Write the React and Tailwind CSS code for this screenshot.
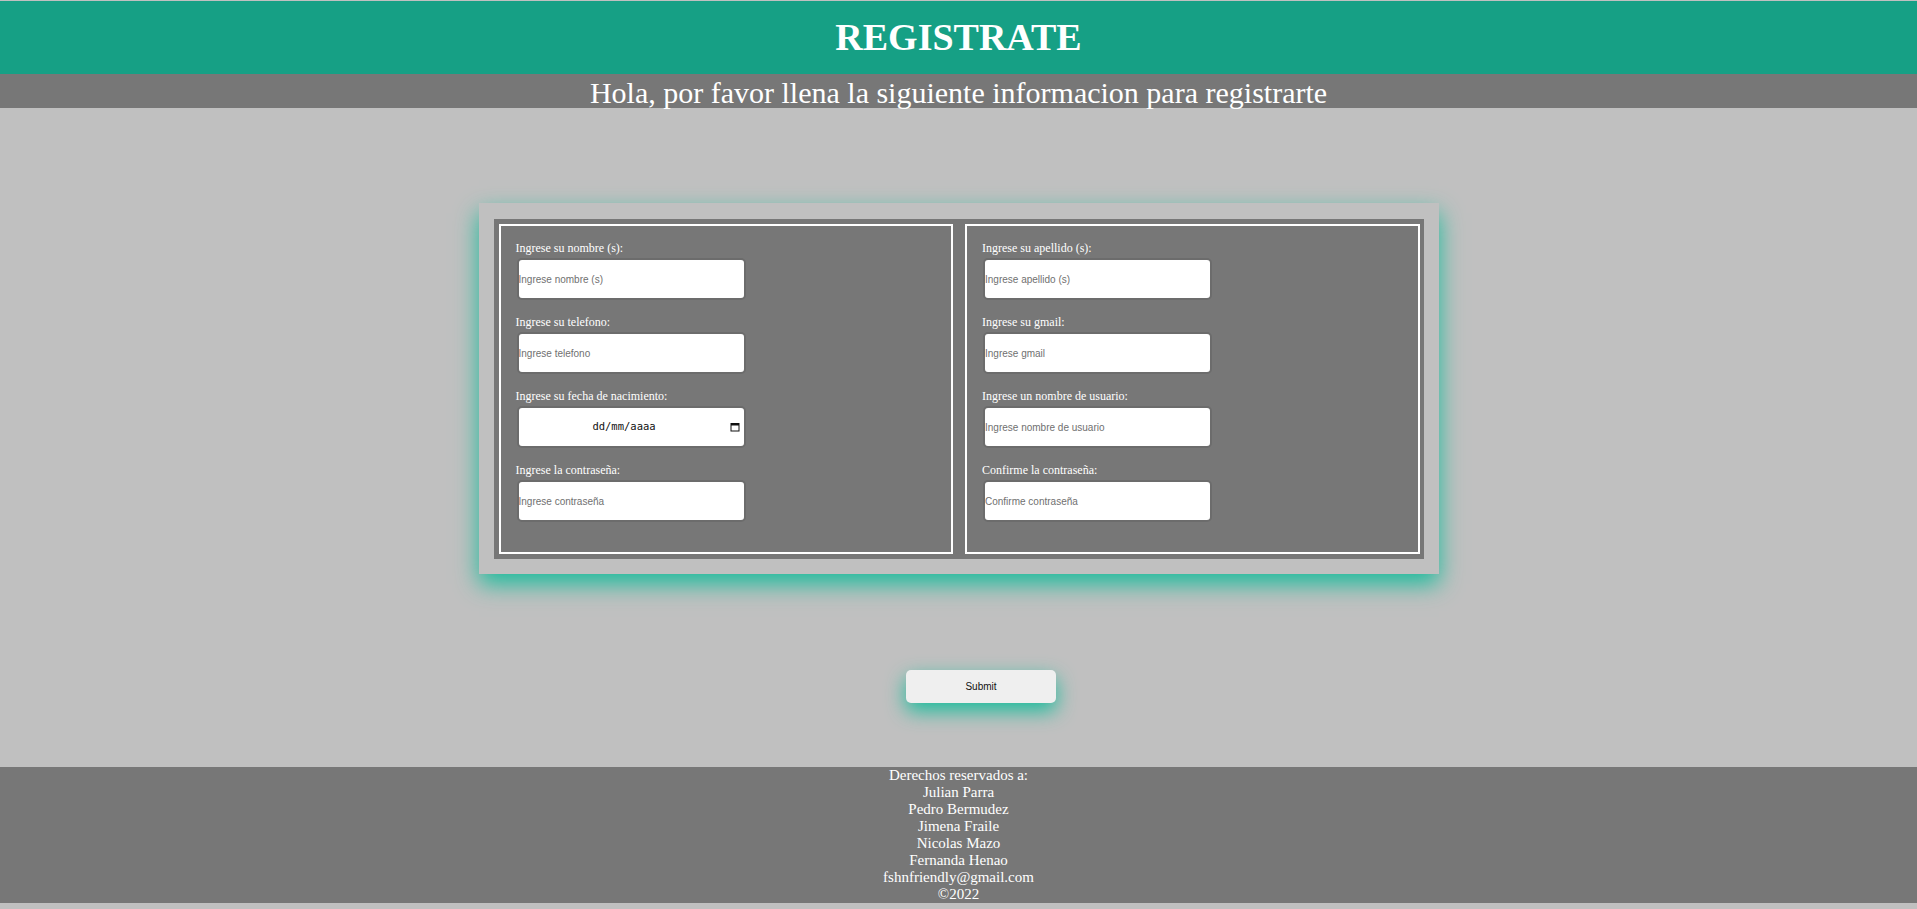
import React from "react"

const leftFields = [
    { label: "Ingrese su nombre (s):", placeholder: "Ingrese nombre (s)" },
    { label: "Ingrese su telefono:", placeholder: "Ingrese telefono" },
    { label: "Ingrese su fecha de nacimiento:", date: true },
    { label: "Ingrese la contraseña:", placeholder: "Ingrese contraseña" },
]

const rightFields = [
    { label: "Ingrese su apellido (s):", placeholder: "Ingrese apellido (s)" },
    { label: "Ingrese su gmail:", placeholder: "Ingrese gmail" },
    { label: "Ingrese un nombre de usuario:", placeholder: "Ingrese nombre de usuario" },
    { label: "Confirme la contraseña:", placeholder: "Confirme contraseña" },
]

const authors = ["Julian Parra", "Pedro Bermudez", "Jimena Fraile", "Nicolas Mazo", "Fernanda Henao"]

function CalendarIcon() {
    return (
        <svg width="10" height="10" viewBox="0 0 10 10" className="shrink-0">
            <rect x="1" y="1.5" width="8" height="7.5" fill="none" stroke="#111" strokeWidth="1" />
            <rect x="1" y="1.5" width="8" height="2" fill="#111" />
        </svg>
    )
}

function Field({ field, last }) {
    return (
        <div className={last ? "" : "mb-[15px]"}>
            <label className="block text-[12px] leading-[14px] text-white">{field.label}</label>
            {field.date ? (
                <div className="mt-[3px] ml-px flex h-[42px] w-[229px] items-center rounded-[5px] border-2 border-[#6c6c6c] bg-white pr-[4px]">
                    <span className="flex-1 text-center font-['DejaVu_Sans_Mono',monospace] text-[10.5px] text-[#111]">dd/mm/aaaa</span>
                    <CalendarIcon />
                </div>
            ) : (
                <input
                    type="text"
                    placeholder={field.placeholder}
                    className="mt-[3px] ml-px block h-[42px] w-[229px] rounded-[5px] border-2 border-[#6c6c6c] bg-white px-0 font-['Liberation_Sans',Arial,sans-serif] text-[10px] text-black outline-none placeholder:text-[#707070]"
                />
            )}
        </div>
    )
}

function Panel({ fields }) {
    return (
        <div className="flex-1 border-2 border-white px-[15px] pt-[15px] pb-[30px]">
            {fields.map((f, i) => (
                <Field key={f.label} field={f} last={i === fields.length - 1} />
            ))}
        </div>
    )
}

export default function App() {
    return (
        <div className="min-h-screen bg-[#c0c0c0] pt-px font-['Liberation_Serif','Times_New_Roman',serif]">
            <header className="flex h-[73px] items-center justify-center bg-[#16a085]">
                <h1 className="text-[38px] font-bold text-white">REGISTRATE</h1>
            </header>
            <div className="flex h-[34px] items-center justify-center bg-[#777777]">
                <p className="pt-[2px] text-[30px] leading-[33px] text-white">Hola, por favor llena la siguiente informacion para registrarte</p>
            </div>

            <div className="mt-[95px] flex justify-center">
                <div className="w-[960px] bg-[#c0c0c0] px-[15px] pt-[16px] pb-[15px] shadow-[0_10px_22px_#1abc9c]">
                    <div className="flex gap-[12px] bg-[#777777] p-[5px] pr-[4px]">
                        <Panel fields={leftFields} />
                        <Panel fields={rightFields} />
                    </div>
                </div>
            </div>

            <div className="mt-[96px] flex justify-center pl-[45px]">
                <button className="h-[33px] w-[150px] rounded-[5px] bg-[#efefef] font-['Liberation_Sans',Arial,sans-serif] text-[10px] text-[#111] shadow-[0_8px_20px_#1abc9c]">
                    Submit
                </button>
            </div>

            <footer className="mt-[64px] mb-[6px] bg-[#777777] text-center text-[15px] leading-[17px] text-white">
                <p>Derechos reservados a:</p>
                {authors.map(a => (
                    <p key={a}>{a}</p>
                ))}
                <p>fshnfriendly@gmail.com</p>
                <p>©2022</p>
            </footer>
        </div>
    )
}
